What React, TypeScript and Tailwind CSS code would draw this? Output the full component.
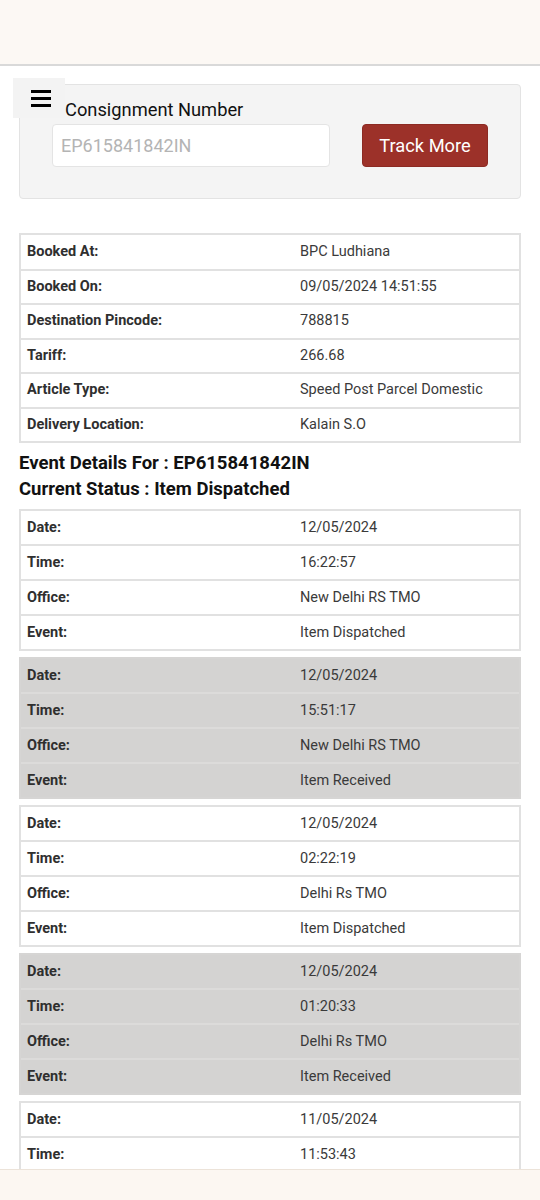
import React from 'react'

const FONT = { fontFamily: 'Roboto, "Noto Sans", Arial, sans-serif' }

const BOOKING = [
  ['Booked At:', 'BPC Ludhiana'],
  ['Booked On:', '09/05/2024 14:51:55'],
  ['Destination Pincode:', '788815'],
  ['Tariff:', '266.68'],
  ['Article Type:', 'Speed Post Parcel Domestic'],
  ['Delivery Location:', 'Kalain S.O'],
]

const EVENTS = [
  { date: '12/05/2024', time: '16:22:57', office: 'New Delhi RS TMO', event: 'Item Dispatched' },
  { date: '12/05/2024', time: '15:51:17', office: 'New Delhi RS TMO', event: 'Item Received' },
  { date: '12/05/2024', time: '02:22:19', office: 'Delhi Rs TMO', event: 'Item Dispatched' },
  { date: '12/05/2024', time: '01:20:33', office: 'Delhi Rs TMO', event: 'Item Received' },
  { date: '11/05/2024', time: '11:53:43' },
]

function InfoTable({ rows, shaded, compact }: { rows: string[][]; shaded?: boolean; compact?: boolean }) {
  return (
    <div
      className={`border-2 ${shaded ? 'border-[#d6d5d4] bg-[#d4d3d2]' : 'border-[#e1e1e1] bg-white'}`}
    >
      {rows.map(([label, value], i) => (
        <div
          key={label}
          className={`grid grid-cols-[271px_1fr] items-center text-[14.5px] ${
            i > 0
              ? `${compact ? 'h-[34.5px]' : 'h-[35px]'} border-t-2 ${shaded ? 'border-[#dcdbda]' : 'border-[#e1e1e1]'}`
              : compact
                ? 'h-[33.5px]'
                : 'h-[33px]'
          }`}
        >
          <div className="pl-[6px] font-bold text-[#2f2f2f]">{label}</div>
          <div className="pl-[8px] text-[#3a3a3a]">{value}</div>
        </div>
      ))}
    </div>
  )
}

export default function App() {
  return (
    <div className="min-h-screen bg-white" style={FONT}>
      {/* top bar */}
      <div className="h-[66px] bg-[#fcf8f4] border-b-2 border-[#d9d9d9]" />

      <div className="relative px-[19px] pt-[18px] pb-[60px]">
        {/* menu toggle */}
        <button className="absolute left-[13px] top-[12px] w-[52px] h-[40px] bg-[#f3f3f3] flex flex-col items-center justify-center gap-[4px] pl-[4px]">
          <span className="block w-[20px] h-[3px] bg-black" />
          <span className="block w-[20px] h-[3px] bg-black" />
          <span className="block w-[20px] h-[3px] bg-black" />
        </button>

        {/* search panel */}
        <div className="bg-[#f4f4f4] border border-[#e3e3e3] rounded-[4px] pt-[13px] pb-[31px] px-[32px]">
          <div className="pl-[13px] text-[18.3px] leading-[24px] text-[#111]">Consignment Number</div>
          <div className="mt-[2px] flex items-center justify-between">
            <input
              placeholder="EP615841842IN"
              className="w-[278px] h-[43px] bg-white border border-[#e4e4e4] rounded-[4px] px-[8px] text-[18px] placeholder:text-[#b4b4b4] outline-none"
            />
            <button className="w-[126px] h-[43px] bg-[#9c3129] border border-[#8c2a23] rounded-[4px] text-white text-[18.3px]">
              Track More
            </button>
          </div>
        </div>

        <div className="mt-[34px]">
          <InfoTable rows={BOOKING} compact />
        </div>

        <div className="mt-[7px] mb-[7px] text-[18.5px] leading-[26px] font-bold text-[#111]">
          <div>Event Details For : EP615841842IN</div>
          <div>Current Status : Item Dispatched</div>
        </div>

        <div className="flex flex-col gap-[6px]">
          {EVENTS.map((e, i) => {
            const rows = [
              ['Date:', e.date],
              ['Time:', e.time],
            ]
            if (e.office) rows.push(['Office:', e.office], ['Event:', e.event ?? ''])
            return <InfoTable key={i} shaded={i % 2 === 1} rows={rows} />
          })}
        </div>
      </div>

      {/* bottom bar */}
      <div className="fixed left-0 right-0 bottom-0 h-[31px] bg-[#fcf7f2] border-t border-[#ece3d9]" />
    </div>
  )
}
